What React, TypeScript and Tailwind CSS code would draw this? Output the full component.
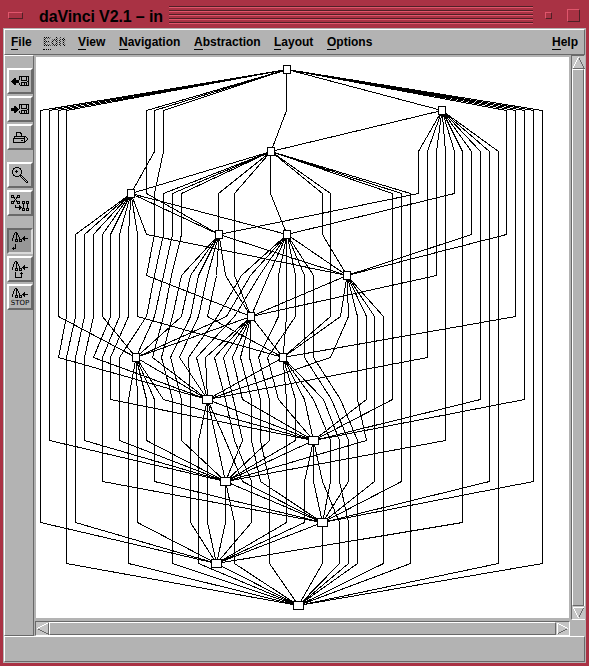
import React from "react";

type Pt = [number, number];

// Vertical position of each of the fourteen graph layers.
const LAYER_Y = [69, 110, 151, 193, 234, 275, 316, 357, 399, 440, 481, 522, 563, 605];

// Nodes: [centre x, layer, box width]
const NODES: Record<string, [number, number, number]> = {
  a: [287, 0, 8],
  b: [442, 1, 8],
  c: [271, 2, 8],
  d: [131, 3, 8],
  e: [219, 4, 8],
  f: [287, 4, 8],
  g: [347, 5, 8],
  h: [251, 6, 8],
  i: [136, 7, 8],
  j: [283, 7, 8],
  k: [207.5, 8, 11],
  l: [313.5, 9, 11],
  m: [225.5, 10, 11],
  n: [322.5, 11, 11],
  o: [216.5, 12, 11],
  p: [298.5, 13, 11],
};

// Edges: source, bend points as "x@layer", target.
const EDGES = `
a 40@1 40@11 o
a 49@1 49@9 m
a 58@1 58@6 i
a 66@1 66@6 58@7 k
a 146@1 146@3 e
a 154@1 154@2 d
a 163@1 163@2 154@3 154@4 146@5 h
a 286@1 c
a b
a 506@1 506@4 g
a 515@1 515@6 j
a 524@1 524@8 l
a 533@1 533@10 n
a 542@1 542@12 p
b c
b 418@2 418@3 e
b 427@2 427@7 k
b 436@2 436@5 h
b 445@2 445@9 m
b 454@2 454@3 f
b 462@2 462@11 o
b 471@2 471@4 g
b 480@2 480@8 l
b 489@2 489@10 n
b 498@2 498@12 p
c d
c 163@3 163@4 154@5 146@6 119@7 119@9 m
c 172@3 172@4 163@5 154@6 i
c 181@3 181@4 171@5 163@6 152@7 k
c 218@3 e
c 234@3 234@5 h
c 270@3 f
c 322@3 322@4 g
c 330@3 330@6 j
c 392@3 392@8 l
c 401@3 401@10 n
c 410@3 410@12 p
d e
d f
d 75@4 75@6 66@7 66@12 p
d 84@4 84@6 75@7 75@11 o
d 93@4 93@6 84@7 84@9 m
d 102@4 102@6 i
d 110@4 110@6 93@7 k
d 119@4 119@6 102@7 102@10 n
d 128@4 128@6 110@7 110@8 l
d 137@4 137@6 j
d 146@4 g
e g
e 181@5 172@6 161@7 172@8 172@12 p
e 190@5 181@6 i
e 198@5 190@6 170@7 181@8 181@9 m
e 207@5 198@6 179@7 k
e 216@5 207@6 j
e 225@5 h
f 241@5 217@6 188@7 190@8 190@11 o
f 250@5 226@6 i
f 259@5 234@6 196@7 k
f 268@5 h
f 278@5 278@6 258@7 269@8 269@9 m
f 286@5 286@6 j
f 295@5 295@6 267@7 278@8 l
f 304@5 304@7 331@8 348@9 348@10 n
f 313@5 313@7 340@8 357@9 357@12 p
f g
g 340@6 j
g 348@6 330@7 k
g 357@6 357@8 366@9 m
g 366@6 366@8 l
g 374@6 374@10 n
g 383@6 383@12 p
g h
h i
h j
h 205@7 k
h 214@7 225@8 234@9 251@10 251@11 o
h 223@7 233@8 242@9 m
h 232@7 242@8 l
h 240@7 251@8 251@9 260@10 n
h 249@7 260@8 260@9 269@10 269@12 p
i k
i 128@8 128@12 p
i 137@8 137@11 o
i 146@8 146@9 m
i 154@8 154@10 n
i 163@8 l
j k
j 286@8 286@11 o
j 295@8 295@9 m
j 304@8 l
j 313@8 330@9 330@10 n
j 323@8 339@9 339@10 348@11 348@12 p
k l
k m
k 198@9 198@12 p
k 207@9 207@11 o
k 225@9 242@10 n
l m
l 304@10 304@11 o
l 313@10 n
l 322@10 339@11 339@12 p
m n
m 225@10 225@11 o
m 234@11 234@12 p
n o
n 322@12 p
o p
`
  .trim()
  .split("\n")
  .map((line) =>
    line
      .split(" ")
      .map((t): Pt => {
        if (t.includes("@")) {
          const [x, l] = t.split("@").map(Number);
          return [x + 0.5, LAYER_Y[l] + 0.5];
        }
        const [x, l] = NODES[t];
        return [x, LAYER_Y[l] + 0.5];
      })
      .map((p) => p.join(","))
      .join(" "),
  );

function Graph() {
  return (
    <svg width="533" height="561" viewBox="36 57 533 561" shapeRendering="crispEdges" className="block">
      {EDGES.map((pts, i) => (
        <polyline key={i} points={pts} fill="none" stroke="#000" strokeWidth="1" />
      ))}
      {Object.entries(NODES).map(([id, [x, l, w]]) => (
        <rect
          key={id}
          x={Math.floor(x - w / 2) + 0.5}
          y={LAYER_Y[l] - 3.5}
          width={w - 1}
          height={8}
          fill="#fff"
          stroke="#000"
        />
      ))}
    </svg>
  );
}

function Bitmap({ rows }: { rows: string[] }) {
  return (
    <svg width={rows[0].length} height={rows.length} shapeRendering="crispEdges" className="block shrink-0">
      {rows.flatMap((r, y) =>
        r.split("").map((c, x) => (c === "#" ? <rect key={`${x}-${y}`} x={x} y={y} width="1" height="1" /> : null)),
      )}
    </svg>
  );
}

const LOAD = [
  "........##########",
  "........#.#....#.#",
  "...##...#.#....#.#",
  "..###...#.#....#.#",
  ".#######..######.#",
  "########........##",
  ".#######..######.#",
  "..###...#.#..#.#.#",
  "...##...#.#..#.#.#",
  ".........#########",
];
const SAVE = [
  "........##########",
  "........#.#....#.#",
  "...##...#.#....#.#",
  "...###..#.#....#.#",
  "#######.#.######.#",
  "########........##",
  "#######...######.#",
  "...###..#.#..#.#.#",
  "...##...#.#..#.#.#",
  ".........#########",
];
const PRINT = [
  "...#####.......",
  "...#...##......",
  "...#....#......",
  "...#....#......",
  ".############..",
  ".#.........#.#.",
  "############..#",
  "#..........#..#",
  "#.......##.#.#.",
  "#..........##..",
  "############...",
];
const ZOOM = [
  "...####.........",
  ".##....##.......",
  ".#......#.......",
  "#...#....#......",
  "#..###...#......",
  "#...#....#......",
  "#........#......",
  ".#......#.......",
  ".##....###......",
  "...####.#.#.....",
  ".........#.#....",
  "..........#.#...",
  "...........#.#..",
  "............#.#.",
  ".............#.#",
  "..............##",
];
const LAYOUT = [
  "###...###.........",
  "#.#...#.#.........",
  "####.####.........",
  "...#.#............",
  "....#.............",
  "...#.#............",
  "####.####..###.###",
  "#.#...#.#..#.#.#.#",
  "###...###..###.###",
  "............#...#.",
  "....#...#...#...#.",
  "....#...##..#...#.",
  "....#######.#...#.",
  "........##.###.###",
  "........#..#.#.#.#",
  "...........###.###",
];
const TREE = [
  "...##...........",
  "..#.##..........",
  "..#.##..........",
  ".#..#.#.........",
  ".#..#.#.....#...",
  ".#..#..#...##...",
  "#...#..#..######",
  "#..###.###.##...",
  "#..#.#.#.#..#...",
  "...###.###......",
];
const RETURN = [
  "................",
  "................",
  "...#............",
  "...#............",
  "...#............",
  ".#.#............",
  "####............",
  ".#..............",
];
const BENT = [
  "................",
  "...#.....#......",
  "...#....###.....",
  "...#.....#......",
  "...#.....#......",
  "...#.....#......",
  "...#######......",
];

function ToolButton({ children, pressed = false, gap = false }: { children: React.ReactNode; pressed?: boolean; gap?: boolean }) {
  return (
    <div
      className={`flex h-[26px] w-[26px] shrink-0 flex-col items-center justify-center border-2 ${gap ? "mt-3" : "mt-[2px]"} ${
        pressed
          ? "border-t-[#696969] border-r-[#dadada] border-b-[#dadada] border-l-[#696969] bg-[#969696]"
          : "border-t-white border-r-[#696969] border-b-[#696969] border-l-white bg-[#b3b3b3]"
      }`}
    >
      {children}
    </div>
  );
}

function MenuItem({ label, className, disabled = false }: { label: string; className: string; disabled?: boolean }) {
  return (
    <div className={className}>
      <span
        className={
          disabled
            ? "bg-[repeating-conic-gradient(#000_0_25%,#b3b3b3_0_50%)] bg-[length:2px_2px] bg-clip-text text-transparent"
            : "text-black"
        }
      >
        <span className={`inline-block border-b leading-[14px] ${disabled ? "border-dotted border-black" : "border-black"}`}>{label[0]}</span>
        {label.slice(1)}
      </span>
    </div>
  );
}

function Arrow({ dir }: { dir: "up" | "down" | "left" | "right" }) {
  const [lit, shade] = {
    up: ["1,12 6.5,1", "6.5,1 12,12 1,12"],
    down: ["12,1 1,1 6.5,12", "12,1 6.5,12"],
    left: ["12,1 1,6.5", "1,6.5 12,12 12,1"],
    right: ["1,12 1,1 12,6.5", "12,6.5 1,12"],
  }[dir];
  return (
    <svg width="13" height="13" shapeRendering="crispEdges" className="block shrink-0 bg-[#c4c4c4]">
      <polyline points={shade} fill="none" stroke="#696969" />
      <polyline points={lit} fill="none" stroke="#fff" />
    </svg>
  );
}

export default function App() {
  return (
    <div className="flex h-[666px] w-[589px] flex-col overflow-hidden bg-[#a93244] pr-[3px] pl-[3px] font-['Liberation_Sans',Arial,sans-serif] font-bold text-black">
      <div className="flex h-7 shrink-0 items-center">
        <div className="mt-[3px] ml-[5px] h-[7px] w-[15px] border border-t-[#e0566c] border-r-[#4f2026] border-b-[#4f2026] border-l-[#e0566c]" />
        <div className="mt-[5px] ml-4 w-[130px] text-[16px] leading-6 tracking-[-0.12px] whitespace-nowrap">daVinci V2.1 – in</div>
        <div className="mt-[2px] flex w-[364px] flex-col gap-[2px]">
          {[0, 1, 2, 3, 4].map((k) => (
            <div key={k} className="h-[2px] border-t border-b border-t-[#4f2026] border-b-[#e0566c]" />
          ))}
        </div>
        <div className="mt-[3px] ml-3 h-[7px] w-[7px] border border-t-[#e0566c] border-r-[#4f2026] border-b-[#4f2026] border-l-[#e0566c]" />
        <div className="mt-[3px] ml-[15px] h-[13px] w-[13px] border border-t-[#e0566c] border-r-[#4f2026] border-b-[#4f2026] border-l-[#e0566c]" />
      </div>

      <div className="flex h-[635px] shrink-0 flex-col border border-[#b3b3b3] bg-[#b3b3b3]">
        <div className="flex h-[26px] shrink-0 items-center border border-t-white border-r-[#696969] border-b-[#696969] border-l-white pl-[6px] text-[12px] leading-[14px] whitespace-nowrap">
          <MenuItem label="File" className="w-8" />
          <MenuItem label="Edit" className="w-[35px]" disabled />
          <MenuItem label="View" className="w-[41px]" />
          <MenuItem label="Navigation" className="w-[75px]" />
          <MenuItem label="Abstraction" className="w-20" />
          <MenuItem label="Layout" className="w-[53px]" />
          <MenuItem label="Options" className="grow" />
          <MenuItem label="Help" className="w-[32px]" />
        </div>

        <div className="flex h-[581px] shrink-0">
          <div className="flex w-[30px] shrink-0 flex-col border border-t-white border-r-[#696969] border-b-[#696969] border-l-white pt-[10px] pl-[2px]">
            <ToolButton><Bitmap rows={LOAD} /></ToolButton>
            <ToolButton><Bitmap rows={SAVE} /></ToolButton>
            <ToolButton><Bitmap rows={PRINT} /></ToolButton>
            <ToolButton gap><Bitmap rows={ZOOM} /></ToolButton>
            <ToolButton><Bitmap rows={LAYOUT} /></ToolButton>
            <ToolButton pressed gap><Bitmap rows={[...TREE, ...RETURN]} /></ToolButton>
            <ToolButton><Bitmap rows={[...TREE, ...BENT]} /></ToolButton>
            <ToolButton>
              <Bitmap rows={TREE} />
              <span className="mt-[2px] font-['DejaVu_Sans',sans-serif] text-[7px] leading-[7px] font-normal">STOP</span>
            </ToolButton>
          </div>
          <div className="flex w-[536px] shrink-0 flex-col pt-[2px]">
            <div className="ml-[2px] h-[561px] w-[533px] overflow-hidden bg-white">
              <Graph />
            </div>
            <div className="mt-[3px] ml-px flex h-[15px] w-[535px] border border-t-[#696969] border-r-white border-b-white border-l-[#696969]">
              <Arrow dir="left" />
              <div className="h-[13px] grow border border-t-white border-r-[#696969] border-b-[#696969] border-l-white" />
              <Arrow dir="right" />
            </div>
          </div>
          <div className="ml-px flex h-[565px] w-[14px] flex-col border border-t-[#696969] border-r-white border-b-white border-l-[#696969]">
            <Arrow dir="up" />
            <div className="w-3 grow border border-t-white border-r-[#696969] border-b-[#696969] border-l-white" />
            <Arrow dir="down" />
          </div>
        </div>

        <div className="h-[26px] shrink-0 border border-t-white border-r-[#696969] border-b-[#696969] border-l-white" />
      </div>
    </div>
  );
}
